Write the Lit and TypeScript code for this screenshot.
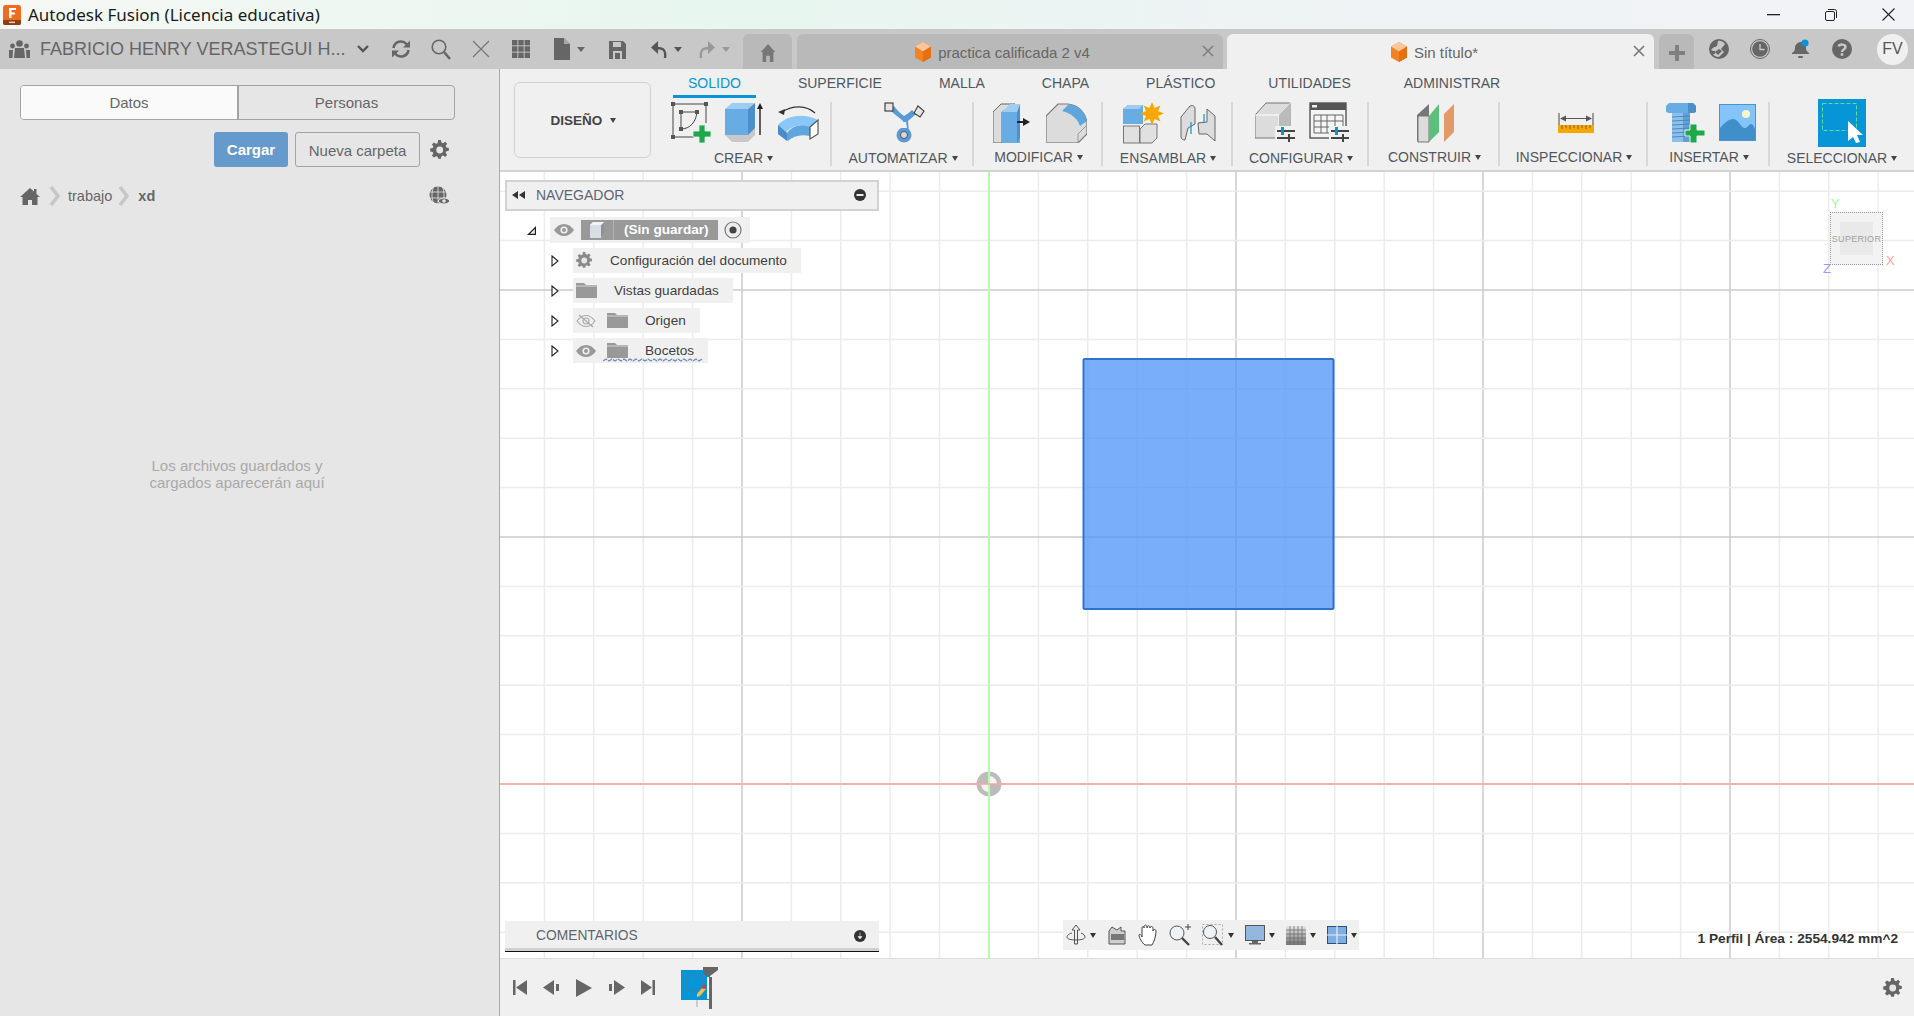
import { LitElement, html, svg, css } from "lit";
import { customElement } from "lit/decorators.js";

const gearPath =
  "M8.5 0h3l.5 2.6 1.7.7 2.2-1.5 2.1 2.1-1.5 2.2.7 1.7 2.6.5v3l-2.6.5-.7 1.7 1.5 2.2-2.1 2.1-2.2-1.5-1.7.7-.5 2.6h-3L8 17.7l-1.7-.7-2.2 1.5L2 16.4l1.5-2.2-.7-1.7L.2 12V9l2.6-.5.7-1.7L2 4.6 4.1 2.5l2.2 1.5L8 3.3z";

const gear = (size: number, fill = "#666") => html`<svg width=${size} height=${size} viewBox="0 0 21 21">
  <path d=${gearPath} fill=${fill} /><circle cx="10.2" cy="10.5" r="3.6" fill="#e6e6e6" />
</svg>`;

const cube = html`<svg width="18" height="21" viewBox="0 0 18 21">
  <path d="M9 0l8 4.5v11L9 20 1 15.5v-11z" fill="#f58220" />
  <path d="M9 0l8 4.5L9 9.5 1 4.5z" fill="#fbc79a" />
  <path d="M9 9.500l8-5v11L9 20z" fill="#e86f10" />
</svg>`;

const eye = (c = "#999") => html`<svg class="eye" width="20" height="12" viewBox="0 0 20 12">
  <path d="M0 6c3-4 6-6 10-6s7 2 10 6c-3 4-6 6-10 6S3 10 0 6z" fill=${c} />
  <circle cx="10" cy="6" r="3.600" fill="#f0f0f0" /><circle cx="10" cy="6" r="2" fill=${c} />
</svg>`;

const eyeOff = html`<svg class="eye" width="20" height="14" viewBox="0 0 20 14" fill="none" stroke="#aaa" stroke-width="1.200">
  <path d="M1 7c3-4 5.500-5.500 9-5.500S16 3 19 7c-3 4-5.500 5.500-9 5.500S4 11 1 7z" />
  <circle cx="10" cy="7" r="3" /><path d="M3 1l14 12" />
</svg>`;

const folder = html`<svg width="21" height="15" viewBox="0 0 21 15">
  <path d="M0 0h8l2 2h11v13H0z" fill="#999" /><path d="M0 3h21" stroke="#f0f0f0" stroke-width=".7" />
</svg>`;

const treeArrow = html`<svg class="arrow" width="8" height="12" viewBox="0 0 8 12">
  <path d="M1 1l6 5-6 5z" fill="#fff" stroke="#222" stroke-width="1.100" />
</svg>`;

const miniCaret = html`<svg width="6" height="5" viewBox="0 0 6 5"><path d="M0 0h6L3 5z" fill="#333" /></svg>`;

// ribbon icons
const sketchIcon = html`<svg width="41" height="42" viewBox="0 0 41 42">
  <g fill="none" stroke="#444" stroke-width="1">
    <path d="M2 2h33M2 2v33M2 35h21M35 2v19" />
    <path d="M10 10h16M10 10v17" /><path d="M10 27c9 0 15-7 16-17" />
  </g>
  <g fill="#555">
    <rect x="0" y="0" width="4" height="4" /><rect x="33" y="0" width="4" height="4" />
    <rect x="0" y="33" width="4" height="4" /><rect x="8" y="8" width="4" height="4" />
    <rect x="24" y="8" width="4" height="4" /><rect x="8" y="25" width="4" height="4" />
  </g>
  <path d="M28 23h6v6h6v6h-6v6h-6v-6h-6v-6h6z" fill="#1fa84a" stroke="#f0f0f0" stroke-width=".8" />
</svg>`;

const extrudeIcon = html`<svg width="40" height="42" viewBox="0 0 40 42">
  <path d="M0 33l7 7h16l7-7v-7H0z" fill="#c9c9c9" />
  <path d="M0 7h23v26H0z" fill="#67ace2" />
  <path d="M0 7l7-6h23l-7 6z" fill="#9dcdf2" />
  <path d="M23 7l7-6v25l-7 7z" fill="#4d8fca" />
  <path d="M35 33V4" stroke="#222" stroke-width="1.400" /><path d="M32 7l3-6 3 6z" fill="#222" />
</svg>`;

const revolveIcon = html`<svg width="42" height="38" viewBox="0 0 42 38">
  <path d="M4 8C15 1 28 1 37 9" fill="none" stroke="#333" stroke-width="1.200" />
  <path d="M0 8l7-3-1 6z" fill="#333" />
  <path d="M0 21C8 12 24 8 40 16l-8 7C23 19 14 22 8 28z" fill="#8ac7f8" />
  <path d="M0 21v9l10 7c5-5 13-7 22-5v-9C23 19 14 22 9 29z" fill="#5fa5de" />
  <path d="M0 21v9l9 7V29z" fill="#4a8cc5" />
  <path d="M32 23l8-7v14l-8 5z" fill="#fff" stroke="#555" stroke-width="1.200" />
</svg>`;

const automateIcon = html`<svg width="42" height="42" viewBox="0 0 42 42">
  <path d="M6 8c5 5 10 8 13 11l-0 11h6l-1-11c3-3 6-5 8-7l-4-4c-3 3-6 5-8 6-3-2-6-5-10-10z" fill="#5b9bd5" />
  <circle cx="20" cy="33" r="7.500" fill="#5b9bd5" /><circle cx="20" cy="33" r="3.500" fill="#d9d9d9" stroke="#555" />
  <path d="M19 20h3l1 6h-5z" fill="#e8f2fa" />
  <rect x="1" y="1" width="8" height="8" fill="#e6e6e6" stroke="#444" stroke-width="1.200" />
  <path d="M34 4l6 5-4 6-6-4z" fill="#e6e6e6" stroke="#444" stroke-width="1.200" />
</svg>`;

const modifyIcon = html`<svg width="37" height="40" viewBox="0 0 37 40">
  <path d="M0 9l8-8h14L9 9v31H0z" fill="#dcdcdc" stroke="#666" stroke-width="1" />
  <path d="M9 9h18v31H9z" fill="#67ace2" />
  <path d="M9 9l8-8h10l-3 8z" fill="#9dcdf2" />
  <path d="M24 9l3-8v33l-3 6z" fill="#4d8fca" />
  <path d="M24 19h9" stroke="#222" stroke-width="2" /><path d="M30 15l7 4-7 4z" fill="#222" />
</svg>`;

const filletIcon = html`<svg width="41" height="40" viewBox="0 0 41 40">
  <path d="M0 13L12 1h10c10 1 17 8 19 18v12l-9 9H0z" fill="#dcdcdc" stroke="#777" stroke-width="1.200" />
  <path d="M16 8l7-7c9 1 16 8 18 17l-7 5c-2-7-9-13-18-15z" fill="#5fa5de" />
  <path d="M0 40h32v-9l9-9" fill="none" stroke="#999" stroke-width="1" />
</svg>`;

const assembleIcon = html`<svg width="41" height="42" viewBox="0 0 41 42">
  <path d="M0 22V7l5-4h15v19z" fill="#67ace2" /><path d="M0 7l5-4h15l-4 4z" fill="#9dcdf2" />
  <rect x="0.500" y="24" width="16" height="17" fill="#e0e0e0" stroke="#777" />
  <path d="M17 27l5-5h12v14l-5 5H17z" fill="#e0e0e0" stroke="#777" />
  <path d="M29 0l2.500 6 6-2.500-2.500 5.500 6 2.500-6 2.500 2.500 5.500-6-2.500-2.500 6-2.500-6-6 2.500 2.500-5.500-6-2.500 6-2.500-2.500-5.500 6 2.500z" fill="#f7a800" />
</svg>`;

const jointIcon = html`<svg width="36" height="36" viewBox="0 0 36 36">
  <path d="M1 12l9-11c3-1 5 0 5 3v15l-7 4-3 12c-2 0-4-1-4-3z" fill="#dcdcdc" stroke="#666" />
  <path d="M27 4l8 7v25l-8-7h-8l-1-11 9-1z" fill="#dcdcdc" stroke="#666" />
  <path d="M11 17v12M24 9v9" stroke="#0696d7" stroke-width="1.200" />
</svg>`;

const sliders = svg`<path d="M22 29h18M22 36h18" stroke="#444" stroke-width="2" />
  <rect x="26" y="25" width="3" height="8" fill="#0696d7" /><rect x="33" y="32" width="2" height="8" fill="#444" />`;

const configIcon = html`<svg width="41" height="42" viewBox="0 0 41 42">
  <path d="M0 13L11 1h24v25l-11 10H0z" fill="#dcdcdc" stroke="#777" />
  <path d="M0 13h24v23M24 13L35 1" fill="none" stroke="#fff" />
  <path d="M24 13L35 1v25L24 36z" fill="#bbb" />
  <rect x="20" y="24" width="21" height="18" fill="#f0f0f0" />${sliders}
</svg>`;

const tableIcon = html`<svg width="41" height="42" viewBox="0 0 41 42">
  <rect x="1" y="1" width="36" height="35" fill="#f5f5f5" stroke="#555" stroke-width="1.400" />
  <rect x="1" y="1" width="36" height="7" fill="#555" /><rect x="3" y="3" width="5" height="2.500" fill="#eee" />
  <path d="M5 13h29v18H5zM5 19h29M5 25h29M12 13v18M18 13v18M26 13v18" fill="none" stroke="#666" stroke-width="1" />
  <rect x="20" y="24" width="21" height="18" fill="#f0f0f0" />${sliders}
</svg>`;

const constructIcon = html`<svg width="38" height="40" viewBox="0 0 38 40">
  <path d="M0 12L12 1v28L0 39z" fill="#777" /><path d="M1 13h11v26H1z" fill="#dcdcdc" stroke="#777" />
  <path d="M12 13L22 1v28L12 39z" fill="#5cc07d" />
  <path d="M27 11L37 1v28L27 39z" fill="#e39a68" />
</svg>`;

const inspectIcon = html`<svg width="36" height="20" viewBox="0 0 36 20">
  <path d="M1 0v12M35 0v12M4 5.500h28" stroke="#555" stroke-width="1.100" />
  <path d="M2 5.500l6-3v6zM34 5.500l-6-3v6z" fill="#555" />
  <rect x="0" y="12" width="36" height="8" fill="#f5a800" />
  <path d="M4 12v4M8 12v3M12 12v4M16 12v3M20 12v4M24 12v3M28 12v4M32 12v3" stroke="#8a6200" stroke-width="1" />
</svg>`;

const boltIcon = html`<svg width="39" height="40" viewBox="0 0 39 40">
  <path d="M0 3l3-3h24l3 3v6l-3 1H3L0 9z" fill="#67ace2" /><path d="M22 0h5l3 3v6l-3 1h-5z" fill="#4d8fca" />
  <rect x="6" y="10" width="18" height="29" fill="#8ac0ea" /><rect x="17" y="10" width="7" height="29" fill="#5fa0d6" />
  <path d="M6 14l18 -1M6 18l18-1M6 22l18-1M6 26l18-1M6 30l18-1M6 34l18-1" stroke="#3d7fb6" stroke-width=".8" />
  <path d="M24 21h7v6h8v6h-8v7h-7v-7h-5v-6h5z" fill="#1fa84a" stroke="#f0f0f0" stroke-width="1" />
</svg>`;

const pictureIcon = html`<svg width="37" height="37" viewBox="0 0 37 37">
  <rect x="0.500" y="0.500" width="36" height="36" fill="#84c4fb" stroke="#4a94d0" />
  <circle cx="27" cy="10" r="4" fill="#fdf6c8" />
  <path d="M1 36V24c4-5 9-9 13-9 5 0 8 8 11 9 3 1 5-4 7-4 2 0 3 3 4 5v11z" fill="#3f8fcb" />
</svg>`;

const selectIcon = html`<svg class="select" width="48" height="48" viewBox="0 0 48 48">
  <rect width="48" height="48" fill="#0696d7" />
  <rect x="4.500" y="4.500" width="34" height="27" fill="none" stroke="#61d9a0" stroke-width="1" stroke-dasharray="4 2" />
  <path d="M30 22v20l5-4 3 6 4-1-3-7h6z" fill="#fff" />
</svg>`;

const groups = [
  { label: "CREAR", width: 177, gap: 13, icons: [sketchIcon, extrudeIcon, revolveIcon] },
  { label: "AUTOMATIZAR", width: 142, gap: 0, icons: [automateIcon] },
  { label: "MODIFICAR", width: 129, gap: 16, icons: [modifyIcon, filletIcon] },
  { label: "ENSAMBLAR", width: 130, gap: 16, icons: [assembleIcon, jointIcon] },
  { label: "CONFIGURAR", width: 136, gap: 13, icons: [configIcon, tableIcon] },
  { label: "CONSTRUIR", width: 131, gap: 0, icons: [constructIcon] },
  { label: "INSPECCIONAR", width: 148, gap: 0, icons: [inspectIcon] },
  { label: "INSERTAR", width: 122, gap: 14, icons: [boltIcon, pictureIcon] },
  { label: "SELECCIONAR", width: 142, gap: 0, icons: [selectIcon] },
];

const ribbonTabs = ["SOLIDO", "SUPERFICIE", "MALLA", "CHAPA", "PLÁSTICO", "UTILIDADES", "ADMINISTRAR"];

// grid of the sketch plane, spacing measured from the reference
const STEP = 49.4;
const ORIGIN_X = 489;
const ORIGIN_Y = 612;
const range = (from: number, to: number) => Array.from({ length: to - from + 1 }, (_, i) => from + i);

@customElement("app-root")
export class AppRoot extends LitElement {
  static styles = css`
    :host {
      display: block;
      width: 1914px;
      height: 1016px;
      overflow: hidden;
      font-family: "Liberation Sans", Arial, sans-serif;
      color: #666;
    }
    svg {
      display: block;
      flex: none;
    }
    .app {
      display: flex;
      flex-direction: column;
      height: 100%;
    }
    .titlebar {
      height: 29px;
      flex: none;
      display: flex;
      align-items: center;
      padding-left: 3px;
      background: linear-gradient(90deg, #f6f8f5 0%, #e7f6ef 38%, #eef3f4 65%, #f2f3f6 100%);
      color: #1b1b1b;
    }
    .title {
      margin-left: 7px;
      font-family: "Noto Sans", sans-serif;
      font-size: 17px;
    }
    .winctl {
      margin-left: auto;
      display: flex;
      align-items: center;
      gap: 45px;
      padding-right: 19px;
    }
    .topbar {
      height: 40px;
      flex: none;
      display: flex;
      align-items: center;
      background: #c8c8c8;
      padding-left: 9px;
    }
    .account {
      margin-left: 10px;
      width: 301px;
      font-size: 18px;
      white-space: nowrap;
      color: #666;
    }
    .chev {
      margin-left: 16px;
      margin-right: 22px;
    }
    .tools {
      display: flex;
      align-items: center;
      gap: 20px;
    }
    .tools.wide {
      gap: 24px;
      margin-left: 22px;
    }
    .pair {
      display: flex;
      align-items: center;
      gap: 6px;
    }
    .redo {
      margin-left: 16px;
    }
    .tabs {
      display: flex;
      align-self: flex-end;
      height: 35px;
      gap: 5px;
      margin-left: 13px;
    }
    .tab {
      position: relative;
      display: flex;
      align-items: center;
      justify-content: center;
      border-radius: 6px 6px 0 0;
      background: #b9b9b9;
      font-size: 15px;
      gap: 6px;
      box-sizing: border-box;
      padding-top: 2px;
    }
    .tab.home {
      width: 49px;
    }
    .tab.doc {
      width: 426px;
      padding-right: 16px;
    }
    .tab.active {
      width: 427px;
      padding-right: 13px;
      background: #f0f0f0;
      margin-left: -1px;
    }
    .tab.add {
      width: 35px;
    }
    .tab-close {
      position: absolute;
      right: 9px;
      top: 11px;
    }
    .status {
      display: flex;
      align-items: center;
      gap: 21px;
      margin-left: 15px;
    }
    .status .bell {
      margin-left: 1px;
    }
    .status .help {
      margin-left: 1px;
    }
    .avatar {
      width: 31px;
      height: 31px;
      margin-left: 4px;
      border-radius: 50%;
      background: #f0f0f0;
      color: #555;
      font-size: 16px;
      display: flex;
      align-items: center;
      justify-content: center;
    }
    .main {
      flex: 1;
      display: flex;
      min-height: 0;
    }
    .side {
      width: 500px;
      box-sizing: border-box;
      flex: none;
      background: #e6e6e6;
      border-right: 1px solid #aaa;
      padding: 16px 0 0 20px;
      display: flex;
      flex-direction: column;
      font-size: 15px;
    }
    .seg {
      width: 435px;
      height: 35px;
      box-sizing: border-box;
      display: flex;
      border: 1px solid #a3a3a3;
      border-radius: 4px;
    }
    .seg div {
      flex: 1;
      display: flex;
      align-items: center;
      justify-content: center;
    }
    .seg .on {
      flex: none;
      width: 216px;
      background: #fafafa;
      border-right: 2px solid #a3a3a3;
      border-radius: 3px 0 0 3px;
    }
    .actions {
      display: flex;
      align-items: center;
      margin-top: 12px;
      padding-left: 194px;
    }
    .btn {
      height: 35px;
      box-sizing: border-box;
      display: flex;
      align-items: center;
      justify-content: center;
      border-radius: 3px;
    }
    .btn.primary {
      width: 74px;
      background: #6699cc;
      color: #fff;
      font-weight: bold;
    }
    .btn.plain {
      width: 125px;
      margin-left: 7px;
      padding-top: 1px;
      border: 1px solid #a3a3a3;
    }
    .actions svg {
      margin-left: 10px;
    }
    .crumbs {
      display: flex;
      align-items: center;
      height: 20px;
      margin-top: 19px;
      font-size: 14.5px;
    }
    .crumbs b {
      color: #666;
      margin-left: 9px;
    }
    .crumbs .c1 {
      margin: 0 8px 0 9px;
    }
    .crumbs .c2 {
      margin-left: 6px;
    }
    .crumbs .globe {
      margin-left: 274px;
    }
    .empty {
      margin-top: 251px;
      width: 434px;
      text-align: center;
      line-height: 17px;
      color: #a9a9a9;
      font-size: 15px;
    }
    .work {
      flex: 1;
      min-width: 0;
      display: flex;
      flex-direction: column;
    }
    .ribbon {
      height: 103px;
      flex: none;
      box-sizing: border-box;
      display: flex;
      background: #f0f0f0;
      border-bottom: 2px solid #d2d2d2;
      padding-left: 14px;
    }
    .design {
      width: 137px;
      height: 76px;
      box-sizing: border-box;
      margin: 13px 4px 0 0;
      padding-left: 2px;
      display: flex;
      align-items: center;
      justify-content: center;
      gap: 8px;
      border: 1px solid #d0d0d0;
      border-radius: 6px;
      font-size: 13.5px;
      font-weight: bold;
      color: #444;
    }
    .caret {
      display: inline-block;
      border: solid transparent;
      border-width: 5px 3.5px 0;
      border-top-color: #444;
    }
    .ribbon-body {
      display: flex;
      flex-direction: column;
    }
    .rtabs {
      display: flex;
      height: 29px;
      gap: 27px;
      padding-left: 18px;
      font-size: 14px;
      color: #4f5760;
    }
    .rtab {
      height: 26px;
      line-height: 28px;
      padding: 0 15px;
    }
    .rtab:nth-last-child(-n + 2) {
      margin-left: -4px;
    }
    .rtab.on {
      color: #0696d7;
      border-bottom: 3px solid #0696d7;
    }
    .groups {
      display: flex;
      margin-top: 4px;
    }
    .group {
      height: 64px;
      box-sizing: border-box;
      padding-left: 2px;
      display: flex;
      flex-direction: column;
      align-items: center;
      border-right: 2px solid #d8d8d8;
    }
    .group:last-child {
      border-right: none;
    }
    .gicons {
      height: 42px;
      display: flex;
      align-items: center;
      padding-left: 3px;
    }
    .select {
      margin-left: -4px;
    }
    .glabel {
      margin-top: 5px;
      line-height: 18px;
      font-size: 14px;
      color: #50565c;
      white-space: nowrap;
    }
    .glabel .caret {
      margin-left: 4px;
      vertical-align: 2px;
    }
    .canvas {
      position: relative;
      flex: 1;
      background: #fff;
      overflow: hidden;
    }
    .plane {
      position: absolute;
      inset: 0;
    }
    .panel {
      position: absolute;
      left: 5px;
      width: 374px;
      box-sizing: border-box;
      background: #f0f0f0;
      display: flex;
      align-items: center;
      font-size: 14px;
      color: #5d6670;
    }
    .panel.nav {
      top: 8px;
      height: 31px;
      border: 2px solid #d2d2d2;
      padding: 0 11px 1px 5px;
    }
    .panel.nav span {
      margin-left: 11px;
    }
    .panel.comments {
      top: 749px;
      height: 30px;
      border-bottom: 3px solid #d0d0d0;
      box-shadow: 0 1px 0 #111;
      padding: 2px 13px 0 31px;
      font-size: 13.8px;
    }
    .panel svg:last-child {
      margin-left: auto;
    }
    .tree {
      position: absolute;
      left: 27px;
      top: 45px;
      display: flex;
      flex-direction: column;
      gap: 5px;
      font-size: 13.6px;
      color: #3f3f3f;
    }
    .root {
      display: flex;
      align-items: center;
      height: 26px;
    }
    .root-body {
      margin-left: 13px;
      width: 200px;
      height: 26px;
      display: flex;
      align-items: center;
      padding-left: 4px;
      box-sizing: border-box;
      background: #f0f0f0;
    }
    .root-tag {
      margin-left: 7px;
      width: 137px;
      height: 20px;
      display: flex;
      align-items: center;
      background: #999;
      color: #fff;
      font-weight: bold;
    }
    .root-tag svg {
      margin: 0 9px;
    }
    .root-tag span {
      border-left: 1px solid #b4b4b4;
      height: 20px;
      line-height: 20px;
      padding-left: 10px;
    }
    .radio {
      margin-left: 6px;
    }
    .row {
      display: flex;
      align-items: center;
      height: 25px;
      padding-left: 24px;
    }
    .row-body {
      position: relative;
      margin-left: 14px;
      height: 25px;
      box-sizing: border-box;
      padding: 0 14px 0 3px;
      display: flex;
      align-items: center;
      gap: 17px;
      background: #f0f0f0;
    }
    .row-body .eye {
      margin-right: -6px;
    }
    .squiggle {
      position: absolute;
      left: 30px;
      bottom: 1px;
    }
    .cube {
      position: absolute;
      left: 1330px;
      top: 40px;
      width: 53px;
      height: 53px;
      box-sizing: border-box;
      border: 1px dotted #999;
      background: #f3f3f3;
      display: flex;
      align-items: center;
      justify-content: center;
      font-size: 9px;
      letter-spacing: 0.3px;
      color: #a0a0a0;
    }
    .cube span {
      background: #e9e9ea;
      width: 33px;
      height: 33px;
      display: flex;
      align-items: center;
      justify-content: center;
      flex: none;
    }
    .axis {
      position: absolute;
      font-size: 13px;
      line-height: 14px;
    }
    .axis.y {
      left: 1331px;
      top: 25px;
      color: #a6f0a6;
    }
    .axis.x {
      left: 1386px;
      top: 82px;
      color: #ffa0a0;
    }
    .axis.z {
      left: 1323px;
      top: 90px;
      color: #9a9aff;
    }
    .navbar {
      position: absolute;
      left: 563px;
      top: 748px;
      width: 296px;
      height: 30px;
      box-sizing: border-box;
      padding-left: 3px;
      background: #f0f0f0;
      display: flex;
      align-items: center;
      gap: 11px;
    }
    .navitem {
      display: flex;
      align-items: center;
      gap: 4px;
    }
    .readout {
      position: absolute;
      right: 16px;
      top: 759px;
      font-size: 13.7px;
      font-weight: bold;
      color: #333;
      white-space: nowrap;
    }
    .timeline {
      height: 58px;
      flex: none;
      box-sizing: border-box;
      display: flex;
      align-items: center;
      gap: 16px;
      padding: 0 11px 0 13px;
      background: #f0f0f0;
      border-top: 1px solid #dcdcdc;
    }
    .tile {
      margin-left: 10px;
    }
    .tl-gear {
      margin-left: auto;
    }
  `;

  private renderGrid() {
    const xs = range(-10, 19);
    const ys = range(-13, 7);
    const line = (i: number) => (i % 5 === 0 ? "#cbcbcb" : "#ececec");
    return html`<svg class="plane" width="1414" height="786">
      ${xs.map((i) => {
        const x = ORIGIN_X + i * STEP;
        return svg`<line x1=${x} x2=${x} y1="0" y2="786" stroke=${line(i)} stroke-width="1.500" />`;
      })}
      ${ys.map((i) => {
        const y = ORIGIN_Y + i * STEP;
        return svg`<line x1="0" x2="1414" y1=${y} y2=${y} stroke=${line(i)} stroke-width="1.500" />`;
      })}
      <line x1=${ORIGIN_X} x2=${ORIGIN_X} y1="0" y2="786" stroke="#b4fdaa" stroke-width="2" />
      <line x1="0" x2="1414" y1=${ORIGIN_Y} y2=${ORIGIN_Y} stroke="#ffa3a3" stroke-width="1.500" />
      <rect x="583.500" y="187" width="250" height="250" rx="1" fill="#4c93fa" fill-opacity=".75" stroke="#3272cf" stroke-width="2" />
      <circle cx=${ORIGIN_X} cy=${ORIGIN_Y} r="12.500" fill="#bcbcbc" />
      <path d="M489 612V604a8 8 0 0 1 8 8zM489 612v8a8 8 0 0 1-8-8z" fill="#f4f4f4" />
      <line x1=${ORIGIN_X} x2=${ORIGIN_X} y1="596" y2="628" stroke="#b4fdaa" stroke-width="2" />
      <line x1="473" x2="505" y1=${ORIGIN_Y} y2=${ORIGIN_Y} stroke="#ffa3a3" stroke-width="1.500" />
    </svg>`;
  }

  private renderTopbar() {
    return html`<div class="topbar">
      <svg width="21" height="18" viewBox="0 0 21 18" fill="#666">
        <circle cx="10.500" cy="3.500" r="3.300" /><path d="M6 8h9l1 10H5z" />
        <circle cx="3.500" cy="6" r="2.400" /><path d="M0 10h4l-.5 8H0z" />
        <circle cx="17.500" cy="6" r="2.400" /><path d="M17 10h4v8h-3.500z" />
      </svg>
      <div class="account">FABRICIO HENRY VERASTEGUI H...</div>
      <svg class="chev" width="12" height="8" viewBox="0 0 12 8">
        <path d="M1 1l5 5 5-5" fill="none" stroke="#555" stroke-width="2.400" />
      </svg>
      <div class="tools">
        <svg width="20" height="20" viewBox="0 0 20 20" fill="none" stroke="#666" stroke-width="2.600">
          <path d="M2.500 9a7.500 7.500 0 0 1 13-4l2 2" /><path d="M17.500 11a7.500 7.500 0 0 1-13 4l-2-2" />
          <path d="M19 1.500v7h-7zM1 18.500v-7h7z" fill="#666" stroke="none" />
        </svg>
        <svg width="20" height="21" viewBox="0 0 20 21" fill="none" stroke="#666">
          <circle cx="8" cy="8" r="6.800" stroke-width="1.600" /><path d="M13 13l6 7" stroke-width="2.600" />
        </svg>
        <svg width="20" height="18" viewBox="0 0 20 18">
          <path d="M2 1l16 16M18 1L2 17" stroke="#777" stroke-width="1.200" />
        </svg>
        <svg width="20" height="19" viewBox="0 0 20 19" fill="#666">
          ${range(0, 8).map(
            (i) => svg`<rect x=${1 + (i % 3) * 6.3} y=${Math.floor(i / 3) * 6.3} width="5.400" height="5.400" />`,
          )}
        </svg>
      </div>
      <div class="tools wide">
        <div class="pair">
          <svg width="18" height="22" viewBox="0 0 18 22"><path d="M1 0h10l6 6v16H1z" fill="#666" /><path d="M11 0v6h6" fill="#aaa" /></svg>
          <svg width="8" height="5" viewBox="0 0 8 5"><path d="M0 0h8L4 5z" fill="#666" /></svg>
        </div>
        <svg width="17" height="19" viewBox="0 0 17 19">
          <path d="M0 1h14l3 3v15H0z" fill="#666" /><rect x="4" y="2" width="8" height="5" fill="#c8c8c8" />
          <rect x="4" y="11" width="9" height="8" fill="#c8c8c8" /><rect x="6" y="13" width="5" height="6" fill="#666" />
        </svg>
        <div class="pair">
          <svg width="18" height="18" viewBox="0 0 18 18">
            <path d="M15 18c1-7-1-10-8-10" fill="none" stroke="#555" stroke-width="2.400" /><path d="M8 1L1 7.500 8 14z" fill="#555" />
          </svg>
          <svg width="8" height="5" viewBox="0 0 8 5"><path d="M0 0h8L4 5z" fill="#555" /></svg>
        </div>
      </div>
      <div class="pair redo">
        <svg width="18" height="18" viewBox="0 0 18 18">
          <path d="M3 18c-1-7 1-10 8-10" fill="none" stroke="#999" stroke-width="2.400" /><path d="M10 1l7 6.500L10 14z" fill="#999" />
        </svg>
        <svg width="8" height="5" viewBox="0 0 8 5"><path d="M0 0h8L4 5z" fill="#999" /></svg>
      </div>
      <div class="tabs">
        <div class="tab home">
          <svg width="18" height="18" viewBox="0 0 20 20">
            <path d="M10 0l8 9h-2v11h-4v-7H8v7H4V9H2z" fill="#777" />
          </svg>
        </div>
        <div class="tab doc">
          ${cube}<span>practica calificada 2 v4</span>
          <svg class="tab-close" width="12" height="12" viewBox="0 0 12 12"><path d="M1 1l10 10M11 1L1 11" stroke="#777" stroke-width="1.300" /></svg>
        </div>
        <div class="tab active">
          ${cube}<span>Sin título*</span>
          <svg class="tab-close" width="12" height="12" viewBox="0 0 12 12"><path d="M1 1l10 10M11 1L1 11" stroke="#777" stroke-width="1.600" /></svg>
        </div>
        <div class="tab add">
          <svg width="16" height="16" viewBox="0 0 16 16"><path d="M8 0v16M0 8h16" stroke="#808080" stroke-width="4" /></svg>
        </div>
      </div>
      <div class="status">
        <svg width="20" height="20" viewBox="0 0 20 20">
          <circle cx="10" cy="10" r="10" fill="#666" /><path d="M2 11c2-3 4-3 6-4l1-5c4-1 6 2 7 3l-4 5 3 3-5 5c-3 0-5-1-6-3 3 0 3-2 2-3-1 0-2 0-4-1z" fill="#c8c8c8" />
          <path d="M6 13l4-3 3 2-4 4z" fill="#666" />
        </svg>
        <svg width="20" height="20" viewBox="0 0 20 20">
          <circle cx="10" cy="10" r="9.500" fill="none" stroke="#666" /><circle cx="10" cy="10" r="7.800" fill="#666" />
          <path d="M10 5v5.500h4.500" fill="none" stroke="#c8c8c8" stroke-width="1.300" />
        </svg>
        <svg class="bell" width="18" height="20" viewBox="0 0 18 20">
          <path d="M9 3c3 0 5 2.500 5 6 0 2 1 4 3 5v1H0v-1c2-1 3-3 3-5 0-3.500 3-6 6-6z" fill="#666" />
          <rect x="6" y="17" width="5" height="2" rx="1" fill="#666" /><circle cx="13" cy="4" r="3.600" fill="#0696d7" />
        </svg>
        <svg class="help" width="20" height="20" viewBox="0 0 20 20">
          <circle cx="10" cy="10" r="10" fill="#666" />
          <path d="M6.700 7.500C7 5 13.500 4.700 13.500 8c0 2.500-3.500 2.500-3.500 5" fill="none" stroke="#c8c8c8" stroke-width="2.400" />
          <rect x="8.700" y="14.200" width="2.600" height="2.600" fill="#c8c8c8" />
        </svg>
        <div class="avatar">FV</div>
      </div>
    </div>`;
  }

  private renderSide() {
    return html`<aside class="side">
      <div class="seg"><div class="on">Datos</div><div>Personas</div></div>
      <div class="actions">
        <div class="btn primary">Cargar</div>
        <div class="btn plain">Nueva carpeta</div>
        ${gear(20)}
      </div>
      <div class="crumbs">
        <svg width="20" height="17" viewBox="0 0 20 17"><path d="M10 0l4 3.500V1h2.500v5L20 9h-2.500v8H12v-5H8v5H2.500V9H0z" fill="#666" /></svg>
        <svg class="c1" width="11" height="20" viewBox="0 0 11 20"><path d="M2 1l7 9-7 9" fill="none" stroke="#c6c6c6" stroke-width="3.500" /></svg>
        <span>trabajo</span>
        <svg class="c2" width="11" height="20" viewBox="0 0 11 20"><path d="M2 1l7 9-7 9" fill="none" stroke="#c6c6c6" stroke-width="3.500" /></svg>
        <b>xd</b>
        <svg class="globe" width="21" height="20" viewBox="0 0 21 20">
          <circle cx="9" cy="9" r="8.500" fill="#666" />
          <path d="M0 6h18M0 12h18M9 0v18M4.500 1c-2 5-2 11 0 16M13.500 1c2 5 2 11 0 16" fill="none" stroke="#e6e6e6" stroke-width=".8" />
          <path d="M9 15c3-4 9-4 12 0-3 4-9 4-12 0z" fill="#666" stroke="#e6e6e6" /><circle cx="15" cy="15" r="1.800" fill="#e6e6e6" />
        </svg>
      </div>
      <div class="empty">Los archivos guardados y<br />cargados aparecerán aquí</div>
    </aside>`;
  }

  private renderRibbon() {
    return html`<div class="ribbon">
      <div class="design">DISEÑO<span class="caret"></span></div>
      <div class="ribbon-body">
        <div class="rtabs">
          ${ribbonTabs.map((t, i) => html`<div class="rtab ${i === 0 ? "on" : ""}">${t}</div>`)}
        </div>
        <div class="groups">
          ${groups.map(
            (g) => html`<div class="group" style="width:${g.width}px">
              <div class="gicons" style="gap:${g.gap}px">${g.icons}</div>
              <div class="glabel">${g.label}<span class="caret"></span></div>
            </div>`,
          )}
        </div>
      </div>
    </div>`;
  }

  private renderTree() {
    return html`<div class="tree">
      <div class="root">
        <svg width="10" height="9" viewBox="0 0 10 9"><path d="M0 9L9 0v9z" fill="#222" /><path d="M3 7.800l4.800-4.800v4.800z" fill="#eee" /></svg>
        <div class="root-body">
          ${eye()}
          <div class="root-tag">
            <svg width="14" height="16" viewBox="0 0 14 16">
              <path d="M0 3l3-3h11v13l-3 3H0z" fill="#d9dde4" /><path d="M11 3l3-3v13l-3 3z" fill="#8d939c" /><path d="M0 3l3-3h11l-3 3z" fill="#f4f5f7" />
            </svg>
            <span>(Sin guardar)</span>
          </div>
          <svg class="radio" width="18" height="18" viewBox="0 0 18 18">
            <circle cx="9" cy="9" r="8" fill="#eee" stroke="#777" stroke-width="1.200" /><circle cx="9" cy="9" r="3.600" fill="#444" />
          </svg>
        </div>
      </div>
      <div class="row">${treeArrow}<div class="row-body">${gear(17, "#8a8a8a")}<span>Configuración del documento</span></div></div>
      <div class="row">${treeArrow}<div class="row-body">${folder}<span>Vistas guardadas</span></div></div>
      <div class="row">${treeArrow}<div class="row-body">${eyeOff}${folder}<span>Origen</span></div></div>
      <div class="row">
        ${treeArrow}
        <div class="row-body">
          ${eye()}${folder}<span>Bocetos</span>
          <svg class="squiggle" width="103" height="4" viewBox="0 0 103 4">
            <path d="M0 3l3-2 3 2 3-2 3 2 3-2 3 2 3-2 3 2 3-2 3 2 3-2 3 2 3-2 3 2 3-2 3 2 3-2 3 2 3-2 3 2 3-2 3 2 3-2 3 2 3-2 3 2 3-2 3 2 3-2 3 2 3-2 3 2 3-2" fill="none" stroke="#6f8db5" stroke-width="1.300" stroke-dasharray="5 1" />
          </svg>
        </div>
      </div>
    </div>`;
  }

  private renderNavbar() {
    return html`<div class="navbar">
      <div class="navitem">
        <svg width="20" height="22" viewBox="0 0 20 22" fill="none" stroke="#555" stroke-width="1">
          <path d="M10 1l4 5h-2.500v14h-3V6H6z" fill="#eee" />
          <path d="M6 9C2 10 1 12 1 13c0 2 4 3 9 3s9-1 9-3c0-1-1-3-4-4" />
        </svg>
        ${miniCaret}
      </div>
      <svg width="20" height="20" viewBox="0 0 20 20">
        <path d="M2 6l3-4 5 3 4-3v4h4v13H2z" fill="#cfcfcf" stroke="#555" /><rect x="4" y="9" width="13" height="6" fill="#777" />
      </svg>
      <svg width="20" height="22" viewBox="0 0 20 22">
        <path d="M7 21c-3-2-6-8-6-10 0-1 2-1 3 2V4c0-2 2-2 2 0 0-4 3-4 3 0 0-3 3-3 3 0 0-2 3-2 3 0v3c0-2 3-2 3 0 0 5-2 11-4 14z" fill="#fff" stroke="#444" stroke-width="1" />
      </svg>
      <svg width="22" height="22" viewBox="0 0 22 22" fill="none">
        <circle cx="8" cy="9" r="7" fill="#eef3f7" stroke="#555" /><path d="M13 14l7 7" stroke="#444" stroke-width="2.400" /><path d="M16 3h6M19 0v6" stroke="#444" />
      </svg>
      <div class="navitem">
        <svg width="22" height="22" viewBox="0 0 22 22" fill="none">
          <rect x="0.500" y="0.500" width="20" height="20" stroke="#aaa" stroke-dasharray="2 2" />
          <circle cx="8" cy="8" r="6.500" fill="#eef3f7" stroke="#555" /><path d="M13 13l7 8" stroke="#444" stroke-width="2.400" />
        </svg>
        ${miniCaret}
      </div>
      <div class="navitem">
        <svg width="20" height="20" viewBox="0 0 20 20">
          <rect x="0.500" y="0.500" width="19" height="15" fill="#93b8e0" stroke="#555" /><path d="M7 16h6v2h3v1.500H4V18h3z" fill="#666" />
        </svg>
        ${miniCaret}
      </div>
      <div class="navitem">
        <svg width="20" height="19" viewBox="0 0 20 19">
          <defs><linearGradient id="g" x1="0" y1="0" x2="0" y2="1"><stop offset="0" stop-color="#e8e8e8" /><stop offset="1" stop-color="#777" /></linearGradient></defs>
          <rect width="20" height="19" fill="url(#g)" />
          <path d="M4 0v19M8 0v19M12 0v19M16 0v19M0 4h20M0 8h20M0 12h20M0 16h20" stroke="#666" stroke-width=".7" />
        </svg>
        ${miniCaret}
      </div>
      <div class="navitem">
        <svg width="20" height="18" viewBox="0 0 20 18">
          <rect x="0.500" y="0.500" width="19" height="17" fill="#80aee0" stroke="#2c4f80" /><path d="M10 0v18M0 9h20" stroke="#e8eff7" stroke-width="1.200" />
        </svg>
        ${miniCaret}
      </div>
    </div>`;
  }

  private renderTimeline() {
    const c = "#666";
    return html`<div class="timeline">
      <svg width="14" height="15" viewBox="0 0 14 15"><rect width="2.500" height="15" fill=${c} /><path d="M14 0v15L3 7.500z" fill=${c} /></svg>
      <svg width="17" height="15" viewBox="0 0 17 15"><path d="M11 0v15L0 7.500z" fill=${c} /><rect x="13" y="4" width="3" height="7" fill=${c} /></svg>
      <svg width="16" height="18" viewBox="0 0 16 18"><path d="M0 0l16 9L0 18z" fill=${c} /></svg>
      <svg width="17" height="15" viewBox="0 0 17 15"><path d="M6 0v15l11-7.500z" fill=${c} /><rect x="1" y="4" width="3" height="7" fill=${c} /></svg>
      <svg width="14" height="15" viewBox="0 0 14 15"><path d="M0 0v15l11-7.500z" fill=${c} /><rect x="11.500" width="2.500" height="15" fill=${c} /></svg>
      <svg class="tile" width="38" height="42" viewBox="0 0 38 42">
        <rect x="15" y="30" width="2" height="10" fill="#ccc" />
        <rect y="3" width="29" height="30" fill="#0696d7" />
        <rect x="6" y="9" width="15" height="15" fill="none" stroke="#3a83ad" stroke-width="1.200" />
        <path d="M16 27l6-7 3 2-6 7-3 1z" fill="#f5c04a" /><circle cx="23" cy="20" r="2" fill="#d9363e" />
        <path d="M22 0h15v3l-8 6h-3l-4-3z" fill="#666" />
        <path d="M29 10h2v32h-3V10z" fill="#666" /><path d="M26 10h2v22h-2z" fill="#fff" />
      </svg>
      <div class="tl-gear">${gear(20)}</div>
    </div>`;
  }

  render() {
    return html`<div class="app">
      <div class="titlebar">
        <svg width="18" height="20" viewBox="0 0 18 20">
          <rect width="18" height="20" rx="2.500" fill="#ef6c1f" /><path d="M0 15h18v3a2 2 0 0 1-2 2H2a2 2 0 0 1-2-2z" fill="#8c3f14" />
          <path d="M6 3h7v2H8.500v2.500H12v2H8.500V13H6z" fill="#fff" /><rect x="6" y="16.500" width="6" height="1.600" fill="#e8c9b4" />
        </svg>
        <span class="title">Autodesk Fusion (Licencia educativa)</span>
        <div class="winctl">
          <svg width="13" height="2" viewBox="0 0 13 2"><rect width="13" height="1.300" fill="#222" /></svg>
          <svg width="12" height="12" viewBox="0 0 12 12" fill="none" stroke="#222"><rect x="0.500" y="2.500" width="9" height="9" rx="1.500" /><path d="M3 .5h6.500a2 2 0 0 1 2 2V9" /></svg>
          <svg width="13" height="13" viewBox="0 0 13 13"><path d="M.5.5l12 12M12.500.5l-12 12" stroke="#222" stroke-width="1.100" /></svg>
        </div>
      </div>
      ${this.renderTopbar()}
      <div class="main">
        ${this.renderSide()}
        <div class="work">
          ${this.renderRibbon()}
          <div class="canvas">
            ${this.renderGrid()}
            <div class="panel nav">
              <svg width="13" height="8" viewBox="0 0 13 8"><path d="M6 0v8L0 4zM13 0v8L7 4z" fill="#333" /></svg>
              <span>NAVEGADOR</span>
              <svg width="12" height="12" viewBox="0 0 12 12"><circle cx="6" cy="6" r="6" fill="#333" /><rect x="2.500" y="5" width="7" height="2" fill="#eee" /></svg>
            </div>
            ${this.renderTree()}
            <div class="cube"><span>SUPERIOR</span></div>
            <div class="axis y">Y</div>
            <div class="axis x">X</div>
            <div class="axis z">Z</div>
            ${this.renderNavbar()}
            <div class="readout">1 Perfil | Área : 2554.942 mm^2</div>
            <div class="panel comments">
              <span>COMENTARIOS</span>
              <svg width="12" height="12" viewBox="0 0 12 12"><circle cx="6" cy="6" r="6" fill="#333" /><path d="M6 2.500v5M4 6.500L6 9l2-2.500z" fill="#eee" stroke="#eee" stroke-width=".6" /></svg>
            </div>
          </div>
          ${this.renderTimeline()}
        </div>
      </div>
    </div>`;
  }
}
